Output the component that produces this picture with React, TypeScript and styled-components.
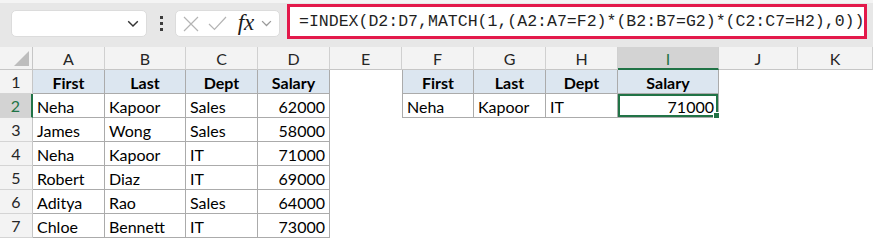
import styled, { createGlobalStyle } from 'styled-components';

const green = '#217346';

const GlobalStyle = createGlobalStyle`
   html, body {
      margin: 0;
      padding: 0;
      background: #ffffff;
      overflow: hidden;
   }
   * {
      box-sizing: border-box;
   }
`;

const Page = styled.div`
   width: 873px;
   height: 240px;
   overflow: hidden;
   font-family: Lato, 'Liberation Sans', sans-serif;
`;

const FormulaBar = styled.div`
   height: 47px;
   display: flex;
   align-items: flex-start;
   padding: 0 6px 0 11px;
   background: #e7e7e7;
   border-top: 3px solid #f4f4f4;
`;

const NameBox = styled.div`
   width: 136px;
   height: 27px;
   margin-top: 7px;
   background: #ffffff;
   border: 1px solid #dcdcdc;
   border-radius: 5px;
   display: flex;
   align-items: center;
   justify-content: flex-end;
   padding-right: 7px;
`;

const Dots = styled.div`
   width: 28px;
   height: 27px;
   margin-top: 7px;
   display: flex;
   flex-direction: column;
   align-items: center;
   justify-content: center;
   gap: 3px;

   span {
      width: 3px;
      height: 3px;
      background: #3c3c3c;
   }
`;

const ButtonGroup = styled.div`
   width: 105px;
   height: 27px;
   margin-top: 7px;
   background: #ffffff;
   border: 1px solid #dcdcdc;
   border-radius: 5px;
   display: flex;
   align-items: center;
   padding-left: 6px;
`;

const IconSlot = styled.div<{ $w: number }>`
   width: ${(p) => p.$w}px;
   height: 25px;
   display: flex;
   align-items: center;
   justify-content: center;
`;

const Fx = styled.span`
   font-family: 'Liberation Serif', serif;
   font-style: italic;
   font-size: 23px;
   color: #1c1c1c;
   line-height: 1;
   margin-top: -3px;
`;

const FormulaInput = styled.div`
   width: 580px;
   height: 35px;
   margin-left: 7px;
   margin-top: 1px;
   background: #ffffff;
   border: 3px solid #e3194b;
   display: flex;
   align-items: center;
   padding-left: 9px;
   overflow: hidden;
   white-space: nowrap;
   font-family: 'Liberation Mono', monospace;
   font-size: 16.55px;
   color: #1f1f1f;
`;

const Sheet = styled.div`
   display: grid;
   grid-template-columns: 33px 72px 81px 72px 72px 72px 72px 72px 72px 101px 79px 1fr;
   grid-template-rows: 23px repeat(7, 24px);
   background: #ffffff;
`;

const Corner = styled.div`
   position: relative;
   background: #f3f3f3;
   border-right: 1px solid #c6c6c6;
   border-bottom: 1px solid #c6c6c6;

   &::after {
      content: '';
      position: absolute;
      right: 3px;
      bottom: 3px;
      width: 0;
      height: 0;
      border-left: 15px solid transparent;
      border-bottom: 15px solid #bdbdbd;
   }
`;

const ColHead = styled.div<{ $active?: boolean }>`
   display: flex;
   align-items: center;
   justify-content: center;
   font-size: 16px;
   color: ${(p) => (p.$active ? green : '#262626')};
   background: ${(p) => (p.$active ? '#d3d3d3' : '#f3f3f3')};
   border-right: 1px solid #d0d0d0;
   border-bottom: ${(p) => (p.$active ? `2px solid ${green}` : '1px solid #c6c6c6')};
   padding-top: ${(p) => (p.$active ? '1px' : '0')};
`;

const RowHead = styled.div<{ $active?: boolean }>`
   display: flex;
   align-items: center;
   justify-content: center;
   font-size: 16px;
   color: ${(p) => (p.$active ? green : '#262626')};
   background: ${(p) => (p.$active ? '#d3d3d3' : '#f3f3f3')};
   border-bottom: 1px solid #d4d4d4;
   border-right: ${(p) => (p.$active ? `2px solid ${green}` : '1px solid #c6c6c6')};
`;

const Cell = styled.div<{
   $head?: boolean;
   $num?: boolean;
   $boxed?: boolean;
   $edge?: boolean;
   $selected?: boolean;
}>`
   position: relative;
   display: flex;
   align-items: center;
   justify-content: ${(p) => (p.$head ? 'center' : p.$num ? 'flex-end' : 'flex-start')};
   padding: 1px 4px 0 4px;
   font-size: 16px;
   font-weight: ${(p) => (p.$head ? 700 : 400)};
   color: #000000;
   white-space: nowrap;
   background: ${(p) => (p.$head ? '#dce6f0' : '#ffffff')};
   border-right: ${(p) => (p.$boxed ? '1px solid #ababab' : 'none')};
   border-bottom: ${(p) => (p.$boxed ? '1px solid #ababab' : 'none')};
   border-left: ${(p) => (p.$edge ? '1px solid #ababab' : 'none')};
   box-shadow: ${(p) => (p.$selected ? `inset 0 0 0 2px ${green}` : 'none')};

   &::after {
      content: '';
      display: ${(p) => (p.$selected ? 'block' : 'none')};
      position: absolute;
      right: -4px;
      bottom: -4px;
      width: 7px;
      height: 7px;
      background: ${green};
      border: 1px solid #ffffff;
   }
`;

const columns = ['A', 'B', 'C', 'D', 'E', 'F', 'G', 'H', 'I', 'J', 'K'];

const rows: string[][] = [
   ['First', 'Last', 'Dept', 'Salary', '', 'First', 'Last', 'Dept', 'Salary', '', ''],
   ['Neha', 'Kapoor', 'Sales', '62000', '', 'Neha', 'Kapoor', 'IT', '71000', '', ''],
   ['James', 'Wong', 'Sales', '58000', '', '', '', '', '', '', ''],
   ['Neha', 'Kapoor', 'IT', '71000', '', '', '', '', '', '', ''],
   ['Robert', 'Diaz', 'IT', '69000', '', '', '', '', '', '', ''],
   ['Aditya', 'Rao', 'Sales', '64000', '', '', '', '', '', '', ''],
   ['Chloe', 'Bennett', 'IT', '73000', '', '', '', '', '', '', ''],
];

function isBoxed(r: number, c: number) {
   if (c <= 3) return true;
   return r <= 1 && c >= 5 && c <= 8;
}

function Chevron({ color, size }: { color: string; size: number }) {
   return (
      <svg width={size} height={size * 0.6} viewBox="0 0 10 6">
         <path d="M1 1 L5 5 L9 1" fill="none" stroke={color} strokeWidth="1.2" />
      </svg>
   );
}

export default function App() {
   const formula = '=INDEX(D2:D7,MATCH(1,(A2:A7=F2)*(B2:B7=G2)*(C2:C7=H2),0))';

   return (
      <Page>
         <GlobalStyle />
         <FormulaBar>
            <NameBox>
               <Chevron color="#333333" size={12} />
            </NameBox>
            <Dots>
               <span />
               <span />
               <span />
            </Dots>
            <ButtonGroup>
               <IconSlot $w={18}>
                  <svg width="16" height="16" viewBox="0 0 16 16">
                     <path d="M1 1 L15 15 M15 1 L1 15" stroke="#b4b4b4" strokeWidth="1.2" />
                  </svg>
               </IconSlot>
               <IconSlot $w={34}>
                  <svg width="19" height="15" viewBox="0 0 19 15">
                     <path d="M1 8 L6.5 13.5 L18 1" fill="none" stroke="#b4b4b4" strokeWidth="1.2" />
                  </svg>
               </IconSlot>
               <IconSlot $w={24}>
                  <Fx>fx</Fx>
               </IconSlot>
               <IconSlot $w={16}>
                  <Chevron color="#9a9a9a" size={11} />
               </IconSlot>
            </ButtonGroup>
            <FormulaInput>{formula}</FormulaInput>
         </FormulaBar>

         <Sheet>
            <Corner />
            {columns.map((col) => (
               <ColHead key={col} $active={col === 'I'}>
                  {col}
               </ColHead>
            ))}

            {rows.map((row, r) => [
               <RowHead key={`h-${r}`} $active={r === 1}>
                  {r + 1}
               </RowHead>,
               ...row.map((value, c) => (
                  <Cell
                     key={`${r}-${c}`}
                     $head={r === 0 && isBoxed(r, c)}
                     $num={/^\d+$/.test(value)}
                     $boxed={isBoxed(r, c)}
                     $edge={c === 5 && isBoxed(r, c)}
                     $selected={r === 1 && c === 8}
                  >
                     {value}
                  </Cell>
               )),
            ])}
         </Sheet>
      </Page>
   );
}
